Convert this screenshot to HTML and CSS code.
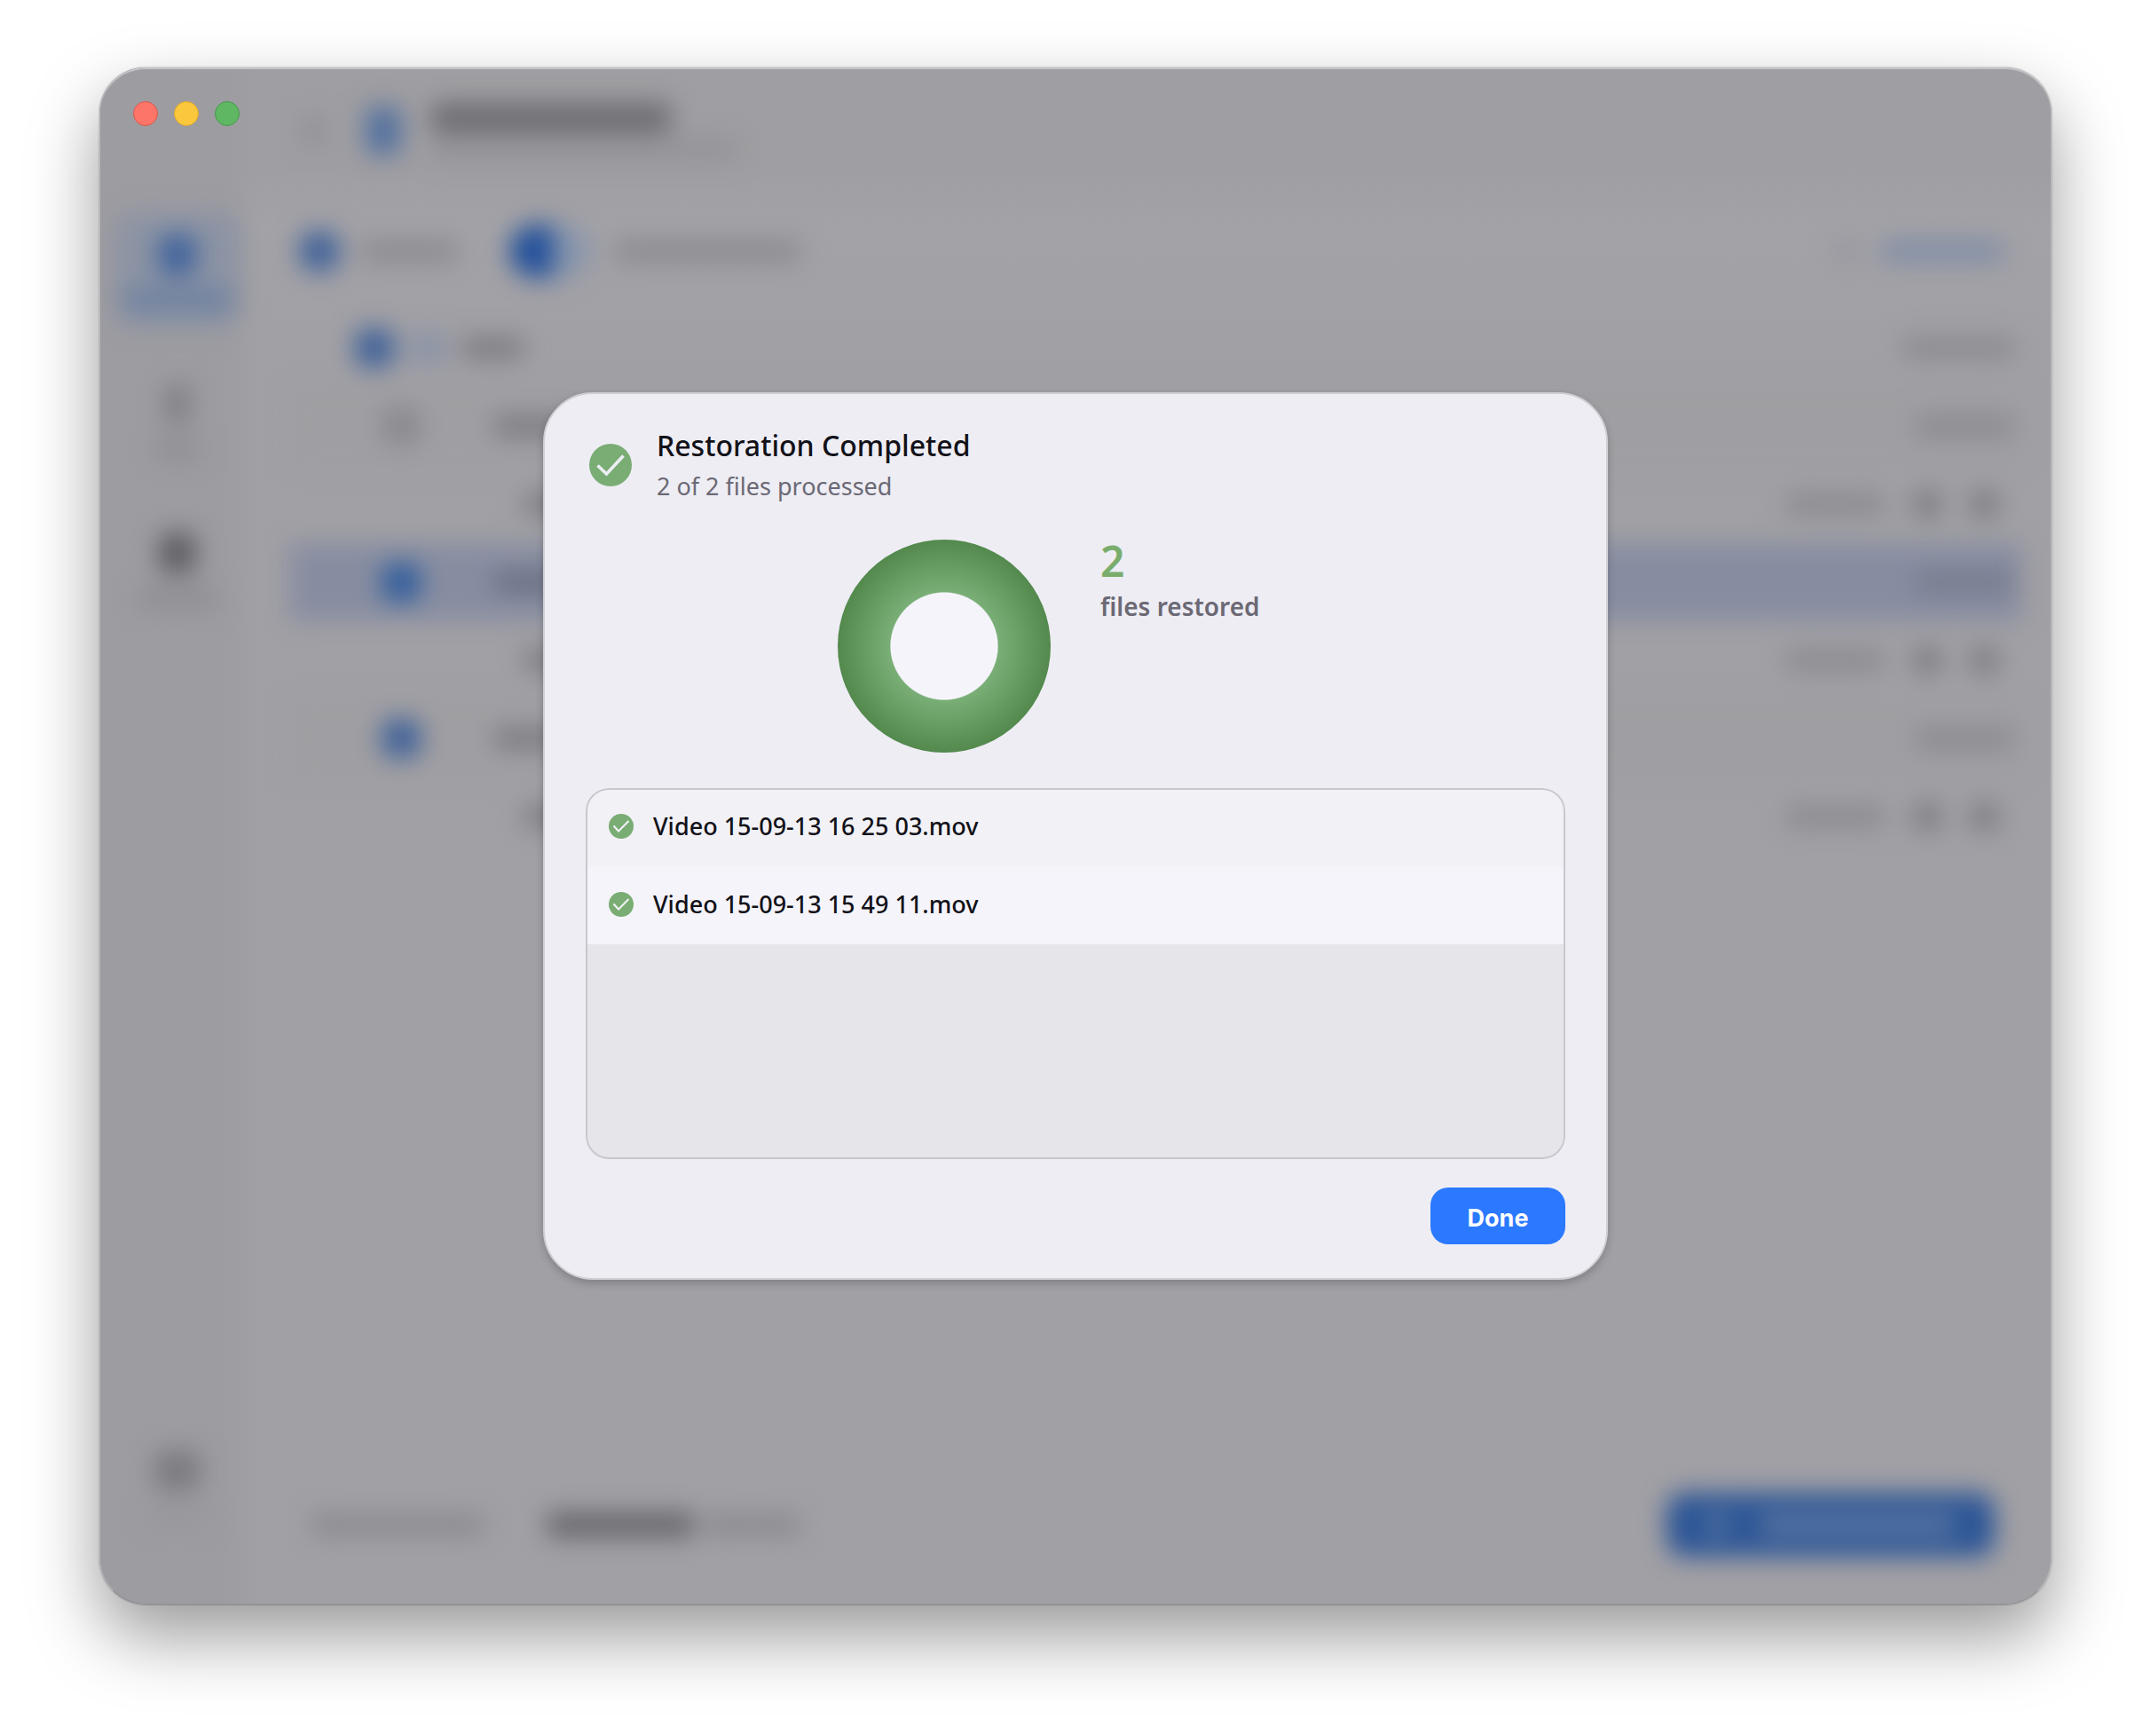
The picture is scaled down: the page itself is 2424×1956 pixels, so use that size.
FILE: index.html
```
<!DOCTYPE html>
<html lang="en">
<head>
  <meta charset="UTF-8">
  <meta name="viewport" content="width=device-width, initial-scale=1.0">
  <title>Restoration Completed</title>
  <link rel="stylesheet" href="styles.css">
</head>
<body>
  <div class="window">
    <!-- Sidebar -->
    <div class="sidebar">
      <div class="traffic-lights">
        <span class="light red"></span>
        <span class="light yellow"></span>
        <span class="light green"></span>
      </div>
      <div class="side-nav blurred">
        <div class="side-item active"><span class="side-icon"></span><span class="side-label"></span></div>
        <div class="side-item phone"><span class="side-icon"></span><span class="side-label"></span></div>
        <div class="side-item dark"><span class="side-icon"></span><span class="side-label"></span></div>
        <div class="side-item bottom"><span class="side-icon"></span><span class="side-label"></span></div>
      </div>
    </div>

    <!-- Main area behind the dialog -->
    <div class="main blurred">
      <div class="header">
        <span class="back"></span>
        <span class="device"></span>
        <div class="header-text">
          <span class="bar header-title"></span>
          <span class="bar header-sub"></span>
        </div>
      </div>
      <div class="toolbar">
        <span class="tick"></span>
        <span class="bar select-label"></span>
        <span class="switch"></span>
        <span class="bar switch-label"></span>
        <span class="bar refresh push"></span>
        <span class="bar link-label"></span>
      </div>
      <div class="rows">
        <div class="row root"><span class="tick"></span><span class="folder"></span><span class="bar name"></span><span class="bar size push"></span></div>
        <div class="row group"><span class="tick off"></span><span class="bar name"></span><span class="bar size push"></span></div>
        <div class="row file"><span class="bar name"></span><span class="bar size push"></span><span class="action"></span><span class="action"></span></div>
        <div class="row group selected"><span class="tick"></span><span class="bar name"></span><span class="bar size push"></span></div>
        <div class="row file"><span class="bar name"></span><span class="bar size push"></span><span class="action"></span><span class="action"></span></div>
        <div class="row group"><span class="tick"></span><span class="bar name"></span><span class="bar size push"></span></div>
        <div class="row file"><span class="bar name"></span><span class="bar size push"></span><span class="action"></span><span class="action"></span></div>
      </div>
      <div class="footer">
        <span class="bar footer-text"></span>
        <span class="bar footer-size"></span>
        <span class="bar footer-note"></span>
        <span class="restore push"><span class="bar restore-icon"></span><span class="bar restore-label"></span></span>
      </div>
    </div>

    <!-- Dialog -->
    <div class="overlay">
      <div class="dialog" role="dialog" aria-labelledby="dialogTitle">
        <div class="dialog-head">
          <svg class="check-large" viewBox="0 0 48 48">
            <circle cx="24" cy="24" r="24" fill="#7aad74"/>
            <path d="M9.500 24.500 L19.500 34 L38.500 13.500" fill="none" stroke="#eeeef5" stroke-width="3.600"/>
          </svg>
          <div>
            <h1 class="dialog-title" id="dialogTitle">Restoration Completed</h1>
            <p class="dialog-sub">2 of 2 files processed</p>
          </div>
        </div>

        <div class="summary">
          <div class="donut"></div>
          <div class="legend">
            <div class="legend-count">2</div>
            <div class="legend-label">files restored</div>
          </div>
        </div>

        <ul class="file-list">
          <li class="file-item">
            <svg class="check-small" viewBox="0 0 28 28">
              <circle cx="14" cy="14" r="14" fill="#7aad74"/>
              <path d="M5.500 13.500 L11 19.500 L22.500 8" fill="none" stroke="#f4f4f9" stroke-width="2"/>
            </svg>
            <span>Video 15-09-13 16 25 03.mov</span>
          </li>
          <li class="file-item">
            <svg class="check-small" viewBox="0 0 28 28">
              <circle cx="14" cy="14" r="14" fill="#7aad74"/>
              <path d="M5.500 13.500 L11 19.500 L22.500 8" fill="none" stroke="#f4f4f9" stroke-width="2"/>
            </svg>
            <span>Video 15-09-13 15 49 11.mov</span>
          </li>
        </ul>

        <div class="dialog-actions">
          <button class="done" type="button">Done</button>
        </div>
      </div>
    </div>
  </div>
</body>
</html>
```
FILE: styles.css
```
* {
  box-sizing: border-box;
}
body {
  font-family: "Noto Sans", "Open Sans", sans-serif;
  margin: 0;
  min-height: 100vh;
  padding: 76px 112px 148px;
  background-color: #fff;
  color: #121118;
  display: flex;
}

/* App window */
.window {
  position: relative;
  flex: 1;
  display: grid;
  grid-template-columns: 180px 1fr;
  background: linear-gradient(#9f9ea2 110px, #a3a2a7 180px, #a1a0a5 320px);
  border-radius: 52px;
  overflow: hidden;
  box-shadow: 0 0 2px rgba(0, 0, 0, 0.4), 0 36px 80px rgba(0, 0, 0, 0.4);
}
.window::after {
  content: "";
  position: absolute;
  inset: 0;
  border: 1px solid #b9b8bc;
  border-top: 2px solid #c4c3c7;
  border-bottom-color: #8d8c90;
  border-radius: 52px;
  pointer-events: none;
}
.blurred {
  filter: blur(14px);
}
.bar {
  height: 24px;
  border-radius: 8px;
  background-color: #8b8a8f;
}
.push {
  margin-left: auto;
}

/* Sidebar */
.sidebar {
  display: flex;
  flex-direction: column;
  background: linear-gradient(90deg, #9d9ca1 140px, rgba(157, 156, 161, 0));
}
.traffic-lights {
  display: flex;
  gap: 18px;
  padding: 38px 0 0 38px;
}
.light {
  width: 28px;
  height: 28px;
  border-radius: 50%;
}
.red {
  background-color: #fd7568;
  border: 1px solid #d9584d;
}
.yellow {
  background-color: #fbc73c;
  border: 1px solid #e0a92b;
}
.green {
  background-color: #5fb763;
  border: 1px solid #459a4b;
}
.side-nav {
  flex: 1;
  display: flex;
  flex-direction: column;
  align-items: center;
  gap: 40px;
  padding: 98px 4px 70px 0;
}
.side-item {
  display: flex;
  flex-direction: column;
  align-items: center;
  gap: 16px;
  width: 140px;
  height: 128px;
  padding-top: 24px;
  border-radius: 20px;
}
.side-icon {
  width: 42px;
  height: 46px;
  border-radius: 12px;
  background-color: #77767b;
}
.side-label {
  width: 90px;
  height: 24px;
  border-radius: 8px;
  background-color: #8f8e93;
}
.active {
  background-color: #8b93a4;
}
.active .side-icon {
  background-color: #40639c;
}
.active .side-label {
  width: 124px;
  background-color: #6d809f;
}
.phone .side-icon {
  width: 28px;
  background-color: #7f7e83;
}
.phone .side-label {
  width: 50px;
}
.dark .side-icon {
  background-color: #5f5e64;
}
.bottom {
  margin-top: auto;
}
.bottom .side-icon {
  width: 52px;
  background-color: #7c7b80;
}
.bottom .side-label {
  width: 70px;
  background-color: #98979c;
}

/* Main area */
.main {
  display: flex;
  flex-direction: column;
  padding: 0 34px;
}
.header {
  display: flex;
  align-items: center;
  height: 142px;
  padding-left: 16px;
}
.back {
  width: 22px;
  height: 30px;
  margin-right: 48px;
  background-color: #8f8e93;
}
.device {
  width: 40px;
  height: 54px;
  margin-right: 34px;
  border-radius: 8px;
  background-color: #54719f;
}
.header-text {
  display: flex;
  flex-direction: column;
  gap: 8px;
}
.header-title {
  width: 270px;
  height: 34px;
  background-color: #6d6c71;
}
.header-sub {
  width: 346px;
  height: 20px;
  background-color: #929196;
}
.toolbar {
  display: flex;
  align-items: center;
  height: 130px;
  padding: 0 20px 0 12px;
}
.tick {
  flex: none;
  width: 44px;
  height: 44px;
  border-radius: 12px;
  background-color: #426399;
}
.off {
  background-color: #8b8a8f;
}
.select-label {
  width: 110px;
  margin: 0 58px 0 24px;
}
.switch {
  width: 90px;
  height: 60px;
  margin-right: 28px;
  border-radius: 30px;
  background: linear-gradient(90deg, #22509a 54%, #8594ac 54%);
}
.switch-label {
  width: 210px;
}
.refresh {
  width: 24px;
  margin-right: 26px;
  background-color: #96949e;
}
.link-label {
  width: 138px;
  background-color: #7f8da6;
}

/* Backup tree */
.row {
  display: flex;
  align-items: center;
  height: 88px;
  padding-right: 8px;
}
.name {
  background-color: #7c7b80;
}
.size {
  width: 112px;
}
.root {
  padding-left: 74px;
}
.root .name {
  width: 70px;
}
.root .size {
  width: 126px;
}
.folder {
  width: 40px;
  height: 34px;
  margin: 0 18px;
  background-color: #8993a6;
}
.group {
  padding-left: 104px;
  background-color: #9f9ea2;
}
.group .name {
  width: 110px;
  margin-left: 82px;
}
.selected {
  background-color: #878da1;
}
.selected .tick {
  background-color: #345f9c;
}
.selected .name {
  background-color: #6a7083;
}
.selected .size {
  background-color: #757d8e;
}
.file {
  padding: 0 26px 0 264px;
}
.file .name {
  width: 160px;
}
.action {
  width: 32px;
  height: 32px;
  margin-left: 32px;
  border-radius: 8px;
  background-color: #7f7e83;
}

/* Footer */
.footer {
  display: flex;
  align-items: center;
  height: 180px;
  margin-top: auto;
  padding: 0 30px 0 24px;
}
.footer-text {
  width: 196px;
  margin-right: 70px;
}
.footer-size {
  width: 166px;
  height: 28px;
  margin-right: 10px;
  background-color: #67666b;
}
.footer-note {
  width: 110px;
}
.restore {
  display: flex;
  align-items: center;
  gap: 34px;
  width: 370px;
  height: 72px;
  padding: 0 44px;
  border-radius: 20px;
  background-color: #2c5596;
}
.restore-icon {
  width: 26px;
  background-color: #5a77a0;
}
.restore-label {
  flex: 1;
  background-color: #5a77a0;
}

/* Dialog */
.overlay {
  position: absolute;
  inset: 0;
  display: flex;
  align-items: center;
  justify-content: center;
}
.dialog {
  width: 1200px;
  max-width: 100%;
  padding: 36px 46px 38px;
  border: 2px solid #d0cfd4;
  border-radius: 56px;
  background-color: #eeedf4;
  box-shadow: 0 4px 10px rgba(0, 0, 0, 0.2);
}
.dialog-head {
  display: flex;
  align-items: center;
  gap: 28px;
  padding-left: 4px;
}
.check-large {
  width: 48px;
  height: 48px;
}
.dialog-title {
  margin: 0 0 4px;
  font-size: 32px;
  line-height: 44px;
  font-weight: 500;
}
.dialog-sub {
  margin: 0;
  font-size: 27px;
  line-height: 40px;
  color: #6b6974;
}
.summary {
  display: flex;
  justify-content: center;
  gap: 56px;
  margin: 40px 0;
}
.donut {
  width: 240px;
  height: 240px;
  border-radius: 50%;
  background: radial-gradient(closest-side, #f5f4fb 50%, #79ae76 51%, #53894d 100%);
}
.legend {
  width: 240px;
}
.legend-count {
  font-size: 48px;
  line-height: 48px;
  font-weight: 600;
  color: #7aad6c;
}
.legend-label {
  margin-top: 8px;
  font-size: 28px;
  line-height: 38px;
  font-weight: 600;
  color: #6b6974;
}
.file-list {
  position: relative;
  margin: 0;
  padding: 0;
  min-height: 418px;
  list-style: none;
  border-radius: 26px;
  overflow: hidden;
  background-color: #e6e5ea;
}
.file-list::after {
  content: "";
  position: absolute;
  inset: 0;
  border: 2px solid #c8c7cd;
  border-radius: 26px;
}
.file-item {
  display: flex;
  align-items: center;
  gap: 22px;
  height: 88px;
  padding: 0 26px 2px;
  font-size: 27px;
  line-height: 36px;
  font-weight: 500;
  background-color: #f2f1f6;
}
.file-item:nth-child(even) {
  background-color: #f5f4fa;
}
.check-small {
  width: 28px;
  height: 28px;
}
.dialog-actions {
  display: flex;
  justify-content: flex-end;
  margin-top: 32px;
}
.done {
  width: 152px;
  height: 64px;
  padding: 4px 0 0;
  border: none;
  border-radius: 20px;
  background-color: #2b79ff;
  color: #fff;
  font-family: Inter, "Liberation Sans", sans-serif;
  font-size: 27px;
  font-weight: 700;
  cursor: pointer;
}
```
